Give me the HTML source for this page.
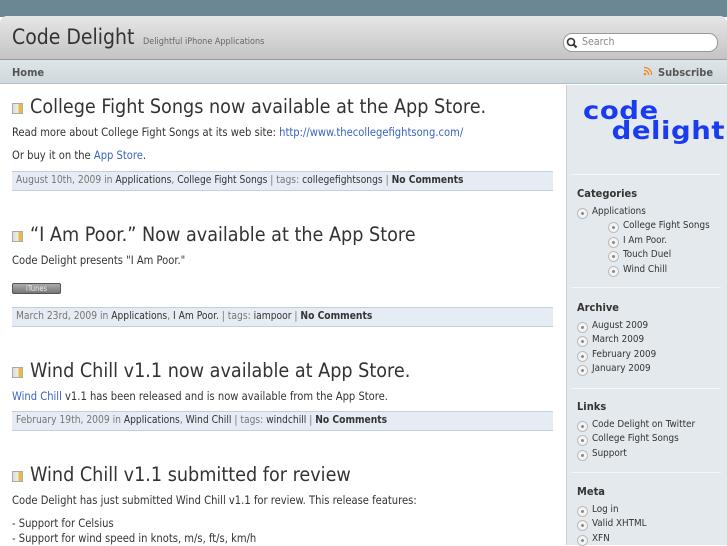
<!DOCTYPE html><html><head><meta charset="utf-8"><style>
*{margin:0;padding:0;box-sizing:border-box}
body{width:727px;height:545px;overflow:hidden;background:#fff;font-family:"DejaVu Sans Condensed","DejaVu Sans",sans-serif;color:#333;position:relative}
.a{position:absolute;white-space:nowrap}
#top{left:0;top:0;width:727px;height:17px;background:#6a8793}
#hdr{left:0;top:16px;width:727px;height:44px;background:linear-gradient(#e6e6e6,#c4c4c4);border-radius:7px 7px 0 0;border-bottom:1px solid #9a9a9a}
#nav{left:0;top:60px;width:727px;height:24px;background:linear-gradient(#dde5e8,#cfd9dd);border-bottom:1px solid #b4c0c4}
#side{left:566px;top:85px;width:161px;height:460px;background:#e3e9ec;border-left:1px solid #c8d0d3}
.t{font-size:19.6px;color:#333}
.p{font-size:11.1px;color:#333}
.lnk{color:#3a63c4}
.meta{left:12px;width:541px;height:20px;background:#e6ecf3;border-top:1px solid #c5d0dc;border-bottom:1px solid #c5d0dc;font-size:10.2px;color:#777;padding:3px 4px}
.meta b{color:#333}.meta span{color:#333}
.ic{display:inline-block;width:11px;height:11px;background:linear-gradient(90deg,#ddd 0,#eee 60%,#e8b040 60%,#f0c040 100%);border:1px solid #aaa;vertical-align:-1px;margin-right:7px}
.h{font-size:11px;font-weight:bold;color:#333;left:577px}
.li{font-size:9.8px;color:#333;padding-left:15px;line-height:12px}
.li:before{content:"";position:absolute;left:0;top:2px;width:9px;height:9px;border-radius:50%;background:radial-gradient(circle,#888 0 1.3px,#f4f4f4 1.6px);border:1px solid #bbb}
.hr{left:571px;width:150px;height:1px;background:#c2c8ca;border-bottom:1px solid #f4f6f7}
</style></head><body>
<div class="a" id="top"></div>
<div class="a" id="hdr"></div>
<div class="a" style="left:12px;top:25px;font-size:21px;color:#333">Code Delight</div>
<div class="a" style="left:143px;top:37px;font-size:9px;color:#666">Delightful iPhone Applications</div>
<div class="a" style="left:563px;top:33px;width:155px;height:19px;background:#fff;border:1px solid #999;border-radius:9px;font-size:10.5px;color:#888;padding:2px 0 0 18px">Search</div>
<svg class="a" style="left:566px;top:37px" width="12" height="12"><circle cx="5" cy="5" r="3.5" fill="none" stroke="#333" stroke-width="1.6"/><path d="M7.5 7.5L10.5 10.5" stroke="#333" stroke-width="2"/></svg>
<div class="a" id="nav"></div>
<div class="a" style="left:12px;top:66px;font-size:11px;font-weight:bold;color:#555">Home</div>
<svg class="a" style="left:643px;top:66px" width="10" height="10"><circle cx="2" cy="8" r="1.3" fill="#f08a1c"/><path d="M1 4.5A4 4 0 0 1 5.5 9M1 1.5A7 7 0 0 1 8.5 9" fill="none" stroke="#f08a1c" stroke-width="1.3"/></svg>
<div class="a" style="left:658px;top:66px;font-size:11px;font-weight:bold;color:#555">Subscribe</div>
<div class="a" id="side"></div>

<div class="a t" style="left:12px;top:95px"><span class="ic"></span>College Fight Songs now available at the App Store.</div>
<div class="a p" style="left:12px;top:126px">Read more about College Fight Songs at its web site: <span class="lnk">http://www.thecollegefightsong.com/</span></div>
<div class="a p" style="left:12px;top:149px">Or buy it on the <span class="lnk">App Store</span>.</div>
<div class="a meta" style="top:171px">August 10th, 2009 in <span>Applications</span>, <span>College Fight Songs</span> | tags: <span>collegefightsongs</span> | <b>No Comments</b></div>

<div class="a t" style="left:12px;top:223px"><span class="ic"></span>“I Am Poor.” Now available at the App Store</div>
<div class="a p" style="left:12px;top:254px">Code Delight presents "I Am Poor."</div>
<div class="a" style="left:12px;top:283px;width:49px;height:11px;background:linear-gradient(#aaa,#777);border:1px solid #555;border-radius:2px;font-size:7.5px;color:#eee;text-align:center;line-height:9px">iTunes</div>
<div class="a meta" style="top:307px">March 23rd, 2009 in <span>Applications</span>, <span>I Am Poor.</span> | tags: <span>iampoor</span> | <b>No Comments</b></div>

<div class="a t" style="left:12px;top:359px"><span class="ic"></span>Wind Chill v1.1 now available at App Store.</div>
<div class="a p" style="left:12px;top:390px"><span class="lnk">Wind Chill</span> v1.1 has been released and is now available from the App Store.</div>
<div class="a meta" style="top:411px">February 19th, 2009 in <span>Applications</span>, <span>Wind Chill</span> | tags: <span>windchill</span> | <b>No Comments</b></div>

<div class="a t" style="left:12px;top:463px"><span class="ic"></span>Wind Chill v1.1 submitted for review</div>
<div class="a p" style="left:12px;top:494px">Code Delight has just submitted Wind Chill v1.1 for review. This release features:</div>
<div class="a p" style="left:12px;top:517px">- Support for Celsius</div>
<div class="a p" style="left:12px;top:532px">- Support for wind speed in knots, m/s, ft/s, km/h</div>

<div class="a" style="left:583px;top:101px;font-size:25px;line-height:20px;color:#1a3cf0;font-family:'DejaVu Sans',sans-serif;font-weight:bold;letter-spacing:0.5px;transform:scaleX(1.1);transform-origin:left">code<br><span style="padding-left:26px">delight</span></div>
<div class="a hr" style="top:174px"></div>
<div class="a h" style="top:187px">Categories</div>
<div class="a li" style="left:577px;top:206px">Applications</div>
<div class="a li" style="left:608px;top:220px">College Fight Songs</div>
<div class="a li" style="left:608px;top:235px">I Am Poor.</div>
<div class="a li" style="left:608px;top:249px">Touch Duel</div>
<div class="a li" style="left:608px;top:264px">Wind Chill</div>
<div class="a hr" style="top:287px"></div>
<div class="a h" style="top:301px">Archive</div>
<div class="a li" style="left:577px;top:320px">August 2009</div>
<div class="a li" style="left:577px;top:334px">March 2009</div>
<div class="a li" style="left:577px;top:349px">February 2009</div>
<div class="a li" style="left:577px;top:363px">January 2009</div>
<div class="a hr" style="top:388px"></div>
<div class="a h" style="top:400px">Links</div>
<div class="a li" style="left:577px;top:419px">Code Delight on Twitter</div>
<div class="a li" style="left:577px;top:433px">College Fight Songs</div>
<div class="a li" style="left:577px;top:448px">Support</div>
<div class="a hr" style="top:472px"></div>
<div class="a h" style="top:485px">Meta</div>
<div class="a li" style="left:577px;top:504px">Log in</div>
<div class="a li" style="left:577px;top:518px">Valid XHTML</div>
<div class="a li" style="left:577px;top:533px">XFN</div>
</body></html>
